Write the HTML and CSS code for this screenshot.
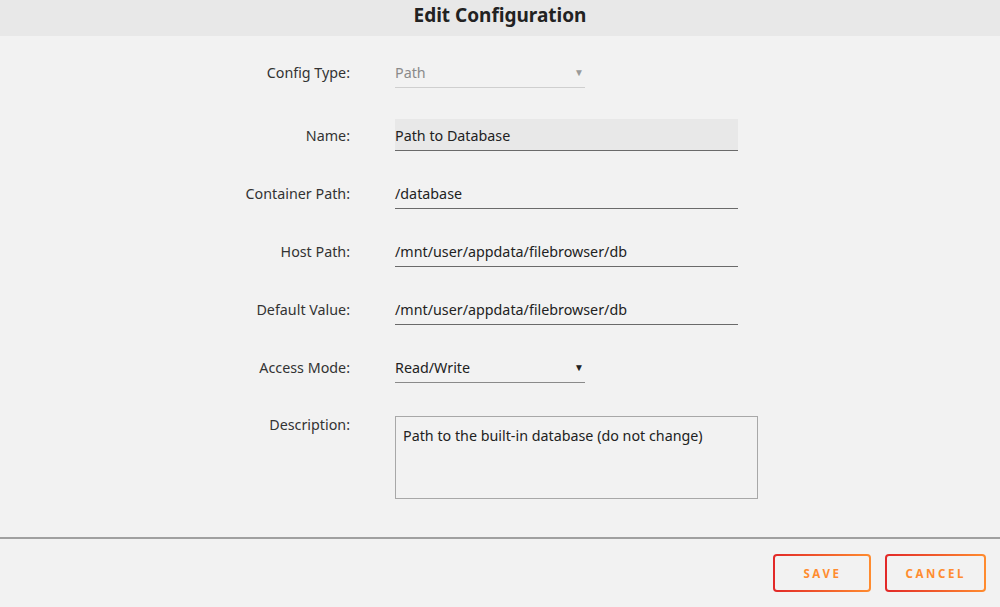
FILE: index.html
```html
<!DOCTYPE html>
<html>
<head>
<meta charset="utf-8">
<link rel="stylesheet" href="styles.css">
</head>
<body>
<div class="dialog">
  <div class="header">Edit Configuration</div>
  <div class="form">
    <div class="row row-select">
      <label class="label">Config Type:</label>
      <div class="select select-disabled"><span>Path</span><span class="arrow">▼</span></div>
    </div>
    <div class="row">
      <label class="label">Name:</label>
      <div class="input input-focus">Path to Database</div>
    </div>
    <div class="row">
      <label class="label">Container Path:</label>
      <div class="input">/database</div>
    </div>
    <div class="row">
      <label class="label">Host Path:</label>
      <div class="input">/mnt/user/appdata/filebrowser/db</div>
    </div>
    <div class="row">
      <label class="label">Default Value:</label>
      <div class="input">/mnt/user/appdata/filebrowser/db</div>
    </div>
    <div class="row row-select">
      <label class="label">Access Mode:</label>
      <div class="select"><span>Read/Write</span><span class="arrow">▼</span></div>
    </div>
    <div class="row row-area">
      <label class="label label-top">Description:</label>
      <div class="textarea">Path to the built-in database (do not change)</div>
    </div>
  </div>
  <div class="footer">
    <button class="btn btn-save">SAVE</button>
    <button class="btn">CANCEL</button>
  </div>
</div>
</body>
</html>
```
FILE: styles.css
```css
* { box-sizing: border-box; }
html, body {
  margin: 0;
  padding: 0;
  background: #f2f2f2;
  font-family: "Noto Sans", "Open Sans", sans-serif;
  color: #222;
}
.dialog {
  width: 1000px;
  height: 607px;
  display: flex;
  flex-direction: column;
}
.header {
  height: 36px;
  background: #e8e8e8;
  text-align: center;
  font-weight: bold;
  font-size: 19px;
  line-height: 31px;
  color: #222;
}
.form {
  padding-top: 20px;
  display: flex;
  flex-direction: column;
  gap: 26px;
  height: 503px;
  border-bottom: 2px solid #a0a0a0;
}
.row {
  display: grid;
  grid-template-columns: 350px auto;
  column-gap: 45px;
  align-items: center;
}
.row-select { margin-bottom: 5px; }
.label {
  text-align: right;
  font-size: 14.3px;
  color: #333;
}
.label-top { align-self: start; line-height: 20px; padding-top: 1px; }
.input, .select {
  height: 32px;
  line-height: 31px;
  padding-top: 1px;
  font-size: 14.3px;
  color: #222;
  border-bottom: 1px solid #6a6a6a;
}
.input { width: 343px; }
.input-focus { background: #e8e8e8; }
.select {
  width: 190px;
  display: flex;
  justify-content: space-between;
  border-bottom-color: #8a8a8a;
}
.select-disabled {
  color: #8a8a8a;
  border-bottom-color: #cfcfcf;
}
.arrow {
  font-size: 10px;
  padding-right: 1px;
}
.select-disabled .arrow { color: #9a9a9a; }
.textarea {
  width: 363px;
  height: 83px;
  border: 1px solid #a8a8a8;
  padding: 9px 7px;
  font-size: 14.3px;
  line-height: 20px;
  margin-top: 2px;
}
.footer {
  display: flex;
  justify-content: flex-end;
  gap: 14px;
  padding: 15px 14px 0 0;
}
.btn {
  height: 38px;
  min-width: 98px;
  padding: 0 18px;
  border: 2px solid transparent;
  border-radius: 4px;
  background: linear-gradient(#f2f2f2, #f2f2f2) padding-box,
              linear-gradient(90deg, #e22828, #ff8c2f) border-box;
  color: #ff8c2f;
  font-family: "Noto Sans", "Open Sans", sans-serif;
  font-weight: bold;
  font-size: 11.5px;
  letter-spacing: 2.6px;
  cursor: pointer;
}
```
